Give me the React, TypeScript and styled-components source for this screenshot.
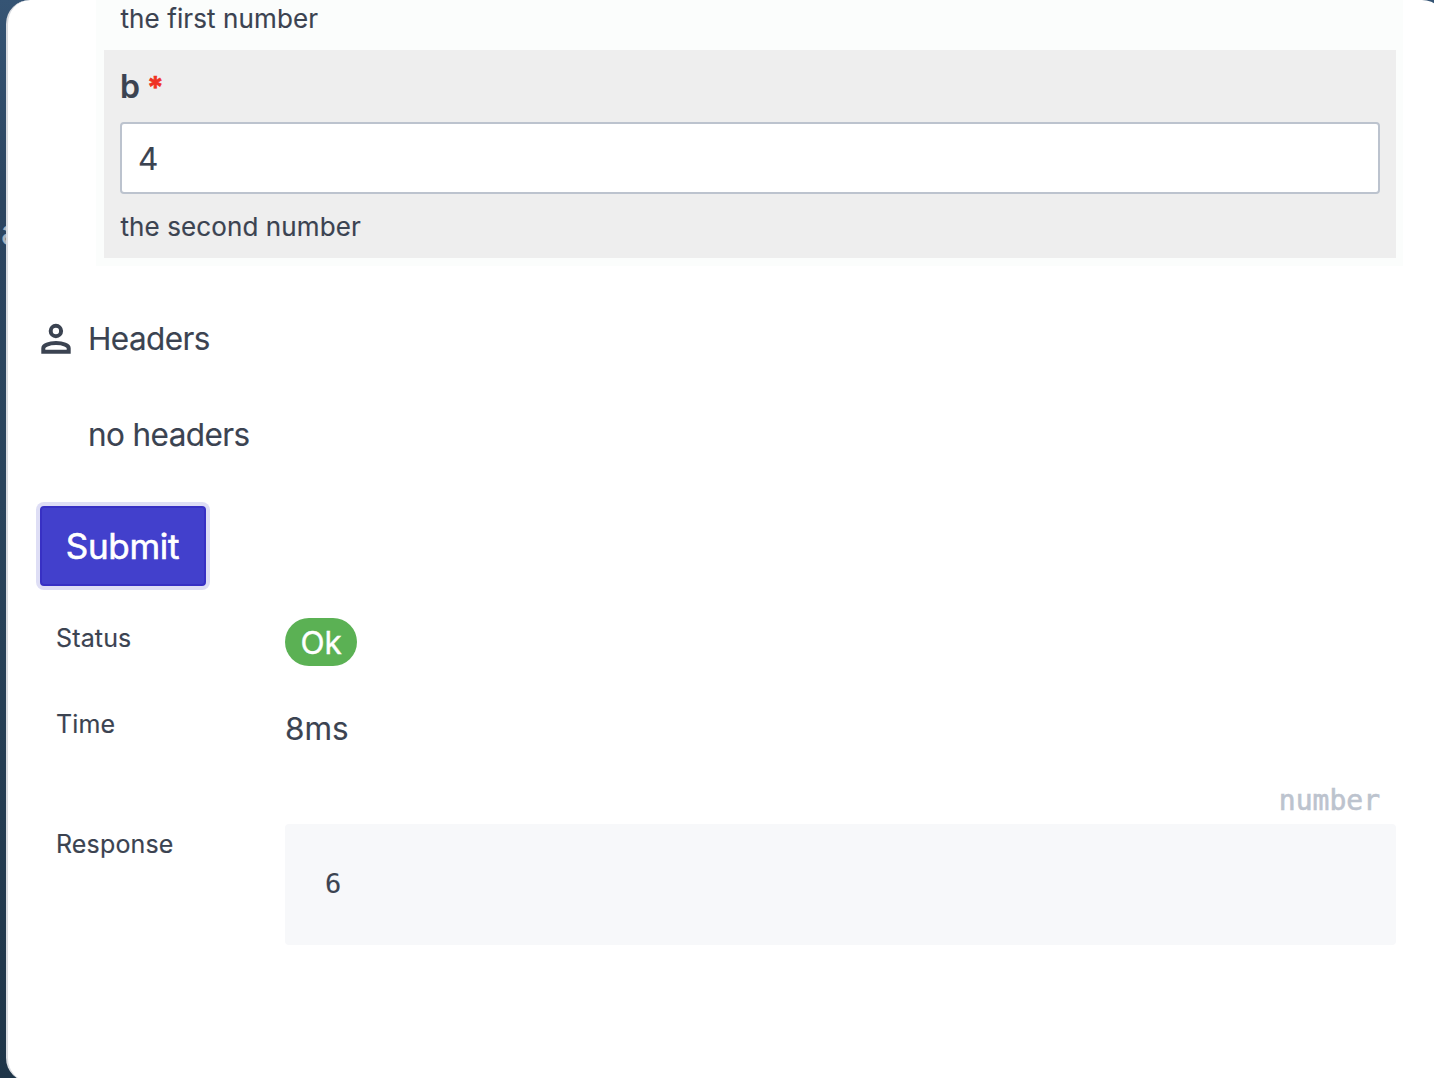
import React from 'react';
import styled, { createGlobalStyle } from 'styled-components';

const Global = createGlobalStyle`
  *, *::before, *::after { box-sizing: border-box; }
  html, body { margin: 0; height: 100%; overflow: hidden; }
  body {
    font-family: Inter, "Liberation Sans", sans-serif;
    color: #3b4351;
    background: #1f3548;
    -webkit-text-stroke: 0.15px currentColor;
  }
`;

const Backdrop = styled.div`
  position: relative;
  width: 1434px;
  height: 1078px;
  overflow: hidden;
  padding-left: 6px;
  background: linear-gradient(#355474 0, #2c4560 200px, #2a445c 500px, #1f3548 1078px);
`;

const BehindText = styled.span`
  position: absolute;
  left: 1px;
  top: 214px;
  font-size: 34px;
  line-height: 36px;
  color: #a9b4c0;
`;

const Modal = styled.main`
  position: relative;
  display: flex;
  flex-direction: column;
  align-items: flex-start;
  width: 1440px;
  height: 1082px;
  padding-left: 32px;
  background: #fff;
  border-left: 2px solid #dadce0;
  border-radius: 24px;
`;

const Fields = styled.section`
  width: 1307px;
  height: 266px;
  margin-left: 56px;
  padding: 0 7px 8px 8px;
  background: #fbfdfc;
`;

const Hint = styled.p`
  margin: 0;
  padding-left: 0.5px;
  font-size: 26px;
  line-height: 36px;
  letter-spacing: 0.1px;
`;

const FirstField = styled.div`
  height: 50px;
  padding: 1px 16px 0;
`;

const Field = styled.div`
  height: 208px;
  padding: 16px;
  background: #eee;
`;

const FieldLabel = styled.label`
  display: flex;
  gap: 8px;
  height: 56px;
  font-size: 32px;
  line-height: 42px;
  font-weight: 600;
`;

const Required = styled.span`
  margin-left: -1px;
  color: #ee3124;
  font-size: 30px;
  line-height: 42px;
  font-weight: 700;
  -webkit-text-stroke: 0.6px currentColor;
`;

const Input = styled.input`
  display: block;
  width: 100%;
  height: 72px;
  margin-bottom: 15px;
  padding: 0 16px;
  border: 2px solid #bcc3ce;
  border-radius: 4px;
  background: #fff;
  color: #3b4351;
  font: 400 31.5px/40px Inter, "Liberation Sans", sans-serif;
`;

const SectionTitle = styled.h2`
  display: flex;
  align-items: center;
  gap: 16px;
  margin: 53px 0 0;
  height: 40px;
  font-size: 31.5px;
  line-height: 40px;
  font-weight: 400;
  letter-spacing: -0.6px;
`;

const TitleText = styled.span`
  height: 40px;
`;

const EmptyNote = styled.p`
  margin: 56px 0 0 48px;
  height: 40px;
  font-size: 31.5px;
  line-height: 40px;
  letter-spacing: -0.6px;
`;

const Submit = styled.button`
  margin: 51px 0 0;
  width: 166px;
  height: 80px;
  padding: 0 1px 0 0;
  border: 2px solid #3730c4;
  border-radius: 4px;
  background: #4240cc;
  box-shadow: 0 0 0 4px #dedef5;
  color: #fff;
  font: 400 35px/76px Inter, "Liberation Sans", sans-serif;
  letter-spacing: -0.3px;
  -webkit-text-stroke: 0.6px currentColor;
`;

const Results = styled.dl`
  display: grid;
  grid-template-columns: 229px 1111px;
  grid-template-rows: 86px 86px auto;
  margin: 32px 0 0 16px;
`;

const Term = styled.dt<{ $offset?: number }>`
  padding-top: ${(p) => p.$offset ?? 2}px;
  font-size: 25px;
  line-height: 36px;
  letter-spacing: 0.15px;
`;

const Value = styled.dd<{ $offset?: number }>`
  margin: 0;
  padding-top: ${(p) => p.$offset ?? 0}px;
  font-size: 31.5px;
  line-height: 48px;
  letter-spacing: -0.1px;
`;

const Badge = styled.span`
  display: inline-block;
  width: 72px;
  height: 48px;
  border-radius: 24px;
  background: #5bb154;
  color: #fff;
  text-align: center;
  line-height: 49px;
  -webkit-text-stroke: 0.4px currentColor;
`;

const TypeName = styled.div`
  height: 34px;
  padding: 1px 16px 0 0;
  text-align: right;
  color: #bcc3ce;
  letter-spacing: 0;
  font: 28px/20px "DejaVu Sans Mono", monospace;
  -webkit-text-stroke: 0.6px currentColor;
`;

const Output = styled.pre`
  margin: 0;
  height: 121px;
  padding: 41px 40px 0;
  border-radius: 4px;
  background: #f7f8fa;
  font: 27px/38px "DejaVu Sans Mono", monospace;
`;

const PersonIcon = () => (
  <svg width="32" height="32" viewBox="0 0 32 32" fill="none" stroke="currentColor" strokeWidth="4">
    <circle cx="15.9" cy="8" r="5.2" />
    <path d="M3.3 28.8v-3.6c0-2.8 5.4-5.1 12.7-5.1s12.7 2.3 12.7 5.1v3.6z" />
  </svg>
);

export default function App() {
  return (
    <>
      <Global />
      <Backdrop>
        <BehindText>a</BehindText>
        <Modal>
          <Fields>
            <FirstField>
              <Hint>the first number</Hint>
            </FirstField>
            <Field>
              <FieldLabel htmlFor="b">
                b <Required>*</Required>
              </FieldLabel>
              <Input id="b" defaultValue="4" />
              <Hint>the second number</Hint>
            </Field>
          </Fields>
          <SectionTitle>
            <PersonIcon />
            <TitleText>Headers</TitleText>
          </SectionTitle>
          <EmptyNote>no headers</EmptyNote>
          <Submit>Submit</Submit>
          <Results>
            <Term>Status</Term>
            <Value>
              <Badge>Ok</Badge>
            </Value>
            <Term>Time</Term>
            <Value $offset={1}>8ms</Value>
            <Term $offset={36}>Response</Term>
            <Value>
              <TypeName>number</TypeName>
              <Output>6</Output>
            </Value>
          </Results>
        </Modal>
      </Backdrop>
    </>
  );
}
